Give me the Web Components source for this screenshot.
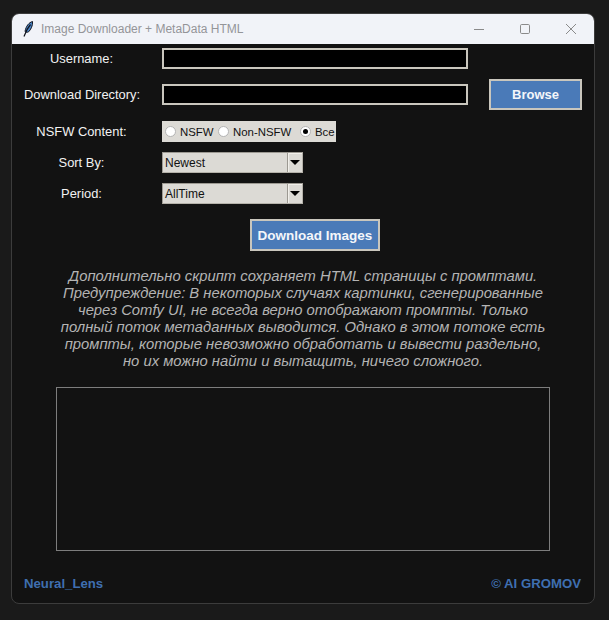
<!DOCTYPE html>
<html>
<head>
<meta charset="utf-8">
<title>Image Downloader + MetaData HTML</title>
<style>
    html, body { margin: 0; height: 620px; overflow: hidden; background: #1a1a1a; }
    body { font-family: "Liberation Sans", Arial, sans-serif; }
</style>
</head>
<body>
<app-window heading="Image Downloader + MetaData HTML">
    <form-row label="Username:" style="margin-top:4px"><text-field></text-field></form-row>
    <form-row label="Download Directory:" style="margin-top:10px">
        <text-field></text-field>
        <blue-button slot="side" style="width:93px;height:31px">Browse</blue-button>
    </form-row>
    <form-row label="NSFW Content:" style="margin-top:11px">
        <radio-group options="NSFW,Non-NSFW,Все" value="Все"></radio-group>
    </form-row>
    <form-row label="Sort By:" style="margin-top:10px"><combo-box value="Newest"></combo-box></form-row>
    <form-row label="Period:" style="margin-top:10px"><combo-box value="AllTime"></combo-box></form-row>
    <action-row><blue-button style="width:130px;height:32px;font-size:13.5px">Download Images</blue-button></action-row>
    <note-text>
        Дополнительно скрипт сохраняет HTML страницы с промптами.<br>
        Предупреждение: В некоторых случаях картинки, сгенерированные<br>
        через Comfy UI, не всегда верно отображают промпты. Только<br>
        полный поток метаданных выводится. Однако в этом потоке есть<br>
        промпты, которые невозможно обработать и вывести раздельно,<br>
        но их можно найти и вытащить, ничего сложного.
    </note-text>
    <log-box></log-box>
    <app-footer left="Neural_Lens" right="© AI GROMOV"></app-footer>
</app-window>

<script>
class AppWindow extends HTMLElement {
    constructor() {
        super();
        this._shadow = this.attachShadow({ mode: 'open' });
    }
    connectedCallback() {
        this._shadow.innerHTML = `
            <style>
                :host {
                    display: block;
                    box-sizing: border-box;
                    width: 584px;
                    height: 591px;
                    margin: 13px 0 0 11px;
                    border: 1px solid #3c3c3c;
                    border-radius: 8px;
                    background: #121212;
                    overflow: hidden;
                }
                .bar {
                    display: flex;
                    align-items: center;
                    height: 30px;
                    background: #f1f3f8;
                    color: #949598;
                    font-size: 12px;
                }
                .icon { width: 14px; height: 18px; margin: 0 6px 0 9px; flex: none; }
                .title { flex: 1; }
                .ctl { width: 46px; height: 30px; display: flex; align-items: center; justify-content: center; flex: none; }
                .ctl svg { width: 12px; height: 12px; }
            </style>
            <div class="bar">
                <svg class="icon" viewBox="0 0 14 18">
                    <path d="M11.5 1.500C8 2.500 5 6 4 11.500c1 .9 2.400 1 3.600.3C10 9.500 11.900 5.500 11.500 1.500z" fill="#4a86c8" stroke="#10131c" stroke-width="1"/>
                    <path d="M9.500 4.500C6.500 8 4.500 12 3 16.500" fill="none" stroke="#10131c" stroke-width="1.200"/>
                </svg>
                <span class="title">${this.getAttribute('heading')}</span>
                <span class="ctl"><svg viewBox="0 0 12 12"><path d="M1 6.500h10" stroke="#8a8a8a"/></svg></span>
                <span class="ctl"><svg viewBox="0 0 12 12"><rect x="1.500" y="1.500" width="9" height="9" rx="1.200" fill="none" stroke="#8a8a8a"/></svg></span>
                <span class="ctl"><svg viewBox="0 0 12 12"><path d="M1 1l10 10M11 1L1 11" stroke="#8a8a8a" fill="none"/></svg></span>
            </div>
            <slot></slot>
        `;
    }
}

class FormRow extends HTMLElement {
    constructor() {
        super();
        this._shadow = this.attachShadow({ mode: 'open' });
    }
    connectedCallback() {
        this._shadow.innerHTML = `
            <style>
                :host {
                    display: grid;
                    grid-template-columns: 115px 306px 93px;
                    column-gap: 23px;
                    align-items: center;
                    padding-left: 12px;
                    color: #f2f2f2;
                    font-size: 12.9px;
                }
                .label { text-align: center; white-space: nowrap; }
                ::slotted([slot=side]) { margin-left: -2px; }
            </style>
            <span class="label">${this.getAttribute('label')}</span>
            <div><slot></slot></div>
            <slot name="side"></slot>
        `;
    }
}

class TextField extends HTMLElement {
    constructor() {
        super();
        this._shadow = this.attachShadow({ mode: 'open' });
    }
    connectedCallback() {
        this._shadow.innerHTML = `
            <style>
                :host { display: block; height: 21px; }
                input {
                    display: block;
                    box-sizing: border-box;
                    width: 100%;
                    height: 100%;
                    margin: 0;
                    padding: 0 2px;
                    background: #000;
                    color: #fff;
                    border: 2px solid #c9c6bd;
                    border-radius: 0;
                    outline: none;
                }
            </style>
            <input type="text">
        `;
    }
}

class BlueButton extends HTMLElement {
    constructor() {
        super();
        this._shadow = this.attachShadow({ mode: 'open' });
    }
    connectedCallback() {
        this._shadow.innerHTML = `
            <style>
                :host { display: block; box-sizing: border-box; font-size: 13px; }
                button {
                    display: block;
                    box-sizing: border-box;
                    width: 100%;
                    height: 100%;
                    margin: 0;
                    padding: 0;
                    background: #4a7ab8;
                    color: #f4f6fa;
                    border: 2px solid #c9c6bd;
                    border-radius: 0;
                    font: bold 1em "Liberation Sans", Arial, sans-serif;
                }
            </style>
            <button type="button"><slot></slot></button>
        `;
    }
}

class RadioGroup extends HTMLElement {
    constructor() {
        super();
        this._shadow = this.attachShadow({ mode: 'open' });
    }
    connectedCallback() {
        const value = this.getAttribute('value');
        const items = this.getAttribute('options').split(',').map(op => `
            <span class="item"><i class="${op === value ? 'on' : ''}"></i>${op}</span>
        `).join('');
        this._shadow.innerHTML = `
            <style>
                :host {
                    display: grid;
                    grid-template-columns: 53px 82px auto;
                    align-items: center;
                    width: 174px;
                    height: 21px;
                    box-sizing: border-box;
                    padding-left: 3px;
                    background: #dcdad5;
                    color: #111;
                    font-size: 11.4px;
                }
                .item { display: flex; align-items: center; gap: 4px; white-space: nowrap; }
                i {
                    box-sizing: border-box;
                    width: 11px;
                    height: 11px;
                    border: 1px solid #b4b4b4;
                    border-radius: 50%;
                    background: #fff;
                    flex: none;
                    position: relative;
                }
                i.on::after {
                    content: '';
                    position: absolute;
                    left: 2px;
                    top: 2px;
                    width: 5px;
                    height: 5px;
                    border-radius: 50%;
                    background: #000;
                }
            </style>
            ${items}
        `;
    }
}

class ComboBox extends HTMLElement {
    constructor() {
        super();
        this._shadow = this.attachShadow({ mode: 'open' });
    }
    connectedCallback() {
        this._shadow.innerHTML = `
            <style>
                :host {
                    display: flex;
                    box-sizing: border-box;
                    width: 141px;
                    height: 21px;
                    background: #dcdad5;
                    border: 1px solid #b5b2aa;
                    border-top-color: #9c9992;
                    border-left-color: #9c9992;
                    color: #111;
                    font-size: 12px;
                }
                .val { flex: 1; display: flex; align-items: center; padding-left: 2px; border-right: 1px solid #9c9992; }
                .arrow {
                    width: 14px;
                    display: flex;
                    align-items: center;
                    justify-content: center;
                    box-shadow: inset 1px 1px 0 #f1efea;
                }
                .arrow::before {
                    content: '';
                    border-left: 5px solid transparent;
                    border-right: 5px solid transparent;
                    border-top: 5px solid #000;
                }
            </style>
            <span class="val">${this.getAttribute('value')}</span>
            <span class="arrow"></span>
        `;
    }
}

class ActionRow extends HTMLElement {
    constructor() {
        super();
        this.attachShadow({ mode: 'open' }).innerHTML = `
            <style>
                :host { display: flex; justify-content: flex-start; margin-top: 15px; padding-left: 238px; }
            </style>
            <slot></slot>
        `;
    }
}

class NoteText extends HTMLElement {
    constructor() {
        super();
        this.attachShadow({ mode: 'open' }).innerHTML = `
            <style>
                :host {
                    display: block;
                    margin-top: 17px;
                    text-align: center;
                    color: #b4b4b4;
                    font-style: italic;
                    font-size: 14.8px;
                    line-height: 17px;
                    white-space: nowrap;
                }
            </style>
            <slot></slot>
        `;
    }
}

class LogBox extends HTMLElement {
    constructor() {
        super();
        this.attachShadow({ mode: 'open' }).innerHTML = `
            <style>
                :host {
                    display: block;
                    box-sizing: border-box;
                    width: 494px;
                    height: 164px;
                    margin: 17px 0 0 44px;
                    border: 1px solid #7d7d7d;
                    background: #121212;
                }
            </style>
        `;
    }
}

class AppFooter extends HTMLElement {
    constructor() {
        super();
        this._shadow = this.attachShadow({ mode: 'open' });
    }
    connectedCallback() {
        this._shadow.innerHTML = `
            <style>
                :host {
                    display: flex;
                    justify-content: space-between;
                    margin-top: 25px;
                    padding: 0 13px 0 12px;
                    color: #3f6fb0;
                    font-weight: bold;
                    font-size: 13.2px;
                    line-height: 15px;
                }
            </style>
            <span>${this.getAttribute('left')}</span>
            <span>${this.getAttribute('right')}</span>
        `;
    }
}

customElements.define('app-window', AppWindow);
customElements.define('form-row', FormRow);
customElements.define('text-field', TextField);
customElements.define('blue-button', BlueButton);
customElements.define('radio-group', RadioGroup);
customElements.define('combo-box', ComboBox);
customElements.define('action-row', ActionRow);
customElements.define('note-text', NoteText);
customElements.define('log-box', LogBox);
customElements.define('app-footer', AppFooter);
</script>
</body>
</html>
